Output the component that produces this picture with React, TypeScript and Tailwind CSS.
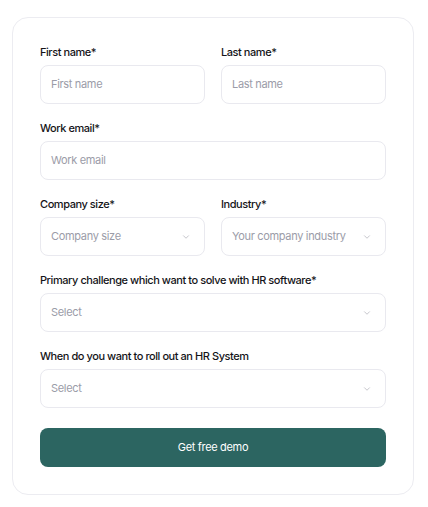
import { ChevronDown } from "lucide-react";

type FieldProps = {
  label: string;
  placeholder: string;
  select?: boolean;
};

const Field = ({ label, placeholder, select }: FieldProps) => {
  return (
    <div className="flex flex-col">
      <label className="text-[11px] leading-[13px] mb-[6px] font-medium text-[#141418] tracking-[-0.04em]">
        {label}
      </label>
      <div className="h-[39px] flex items-center justify-between rounded-[8px] border border-[#e9e9ef] bg-white pl-[10px] pr-[13px]">
        <span className="text-[11px] text-[#9b9ca8] tracking-[-0.03em]">
          {placeholder}
        </span>
        {select && (
          <ChevronDown className="h-[10px] w-[10px] text-[#a3a4ae]" strokeWidth={1.5} />
        )}
      </div>
    </div>
  );
};

const App = () => {
  return (
    <div
      className="min-h-[507px] bg-white pt-[17px] pl-[12px]"
      style={{ fontFamily: "Inter, 'Liberation Sans', sans-serif" }}
    >
      <form className="w-[402px] rounded-[16px] border border-[#ececf1] bg-white px-[27px] pt-[28px] pb-[27px] flex flex-col gap-[18px]">
        {/* Name */}
        <div className="grid grid-cols-2 gap-[16px]">
          <Field label="First name*" placeholder="First name" />
          <Field label="Last name*" placeholder="Last name" />
        </div>

        <Field label="Work email*" placeholder="Work email" />

        <div className="grid grid-cols-2 gap-[16px]">
          <Field label="Company size*" placeholder="Company size" select />
          <Field label="Industry*" placeholder="Your company industry" select />
        </div>

        <Field
          label="Primary challenge which want to solve with HR software*"
          placeholder="Select"
          select
        />
        <Field label="When do you want to roll out an HR System" placeholder="Select" select />

        <button
          type="button"
          className="mt-[2px] h-[39px] rounded-[8px] bg-[#2c6561] text-white text-[11px] tracking-[-0.03em]"
        >
          Get free demo
        </button>
      </form>
    </div>
  );
};

export default App;
